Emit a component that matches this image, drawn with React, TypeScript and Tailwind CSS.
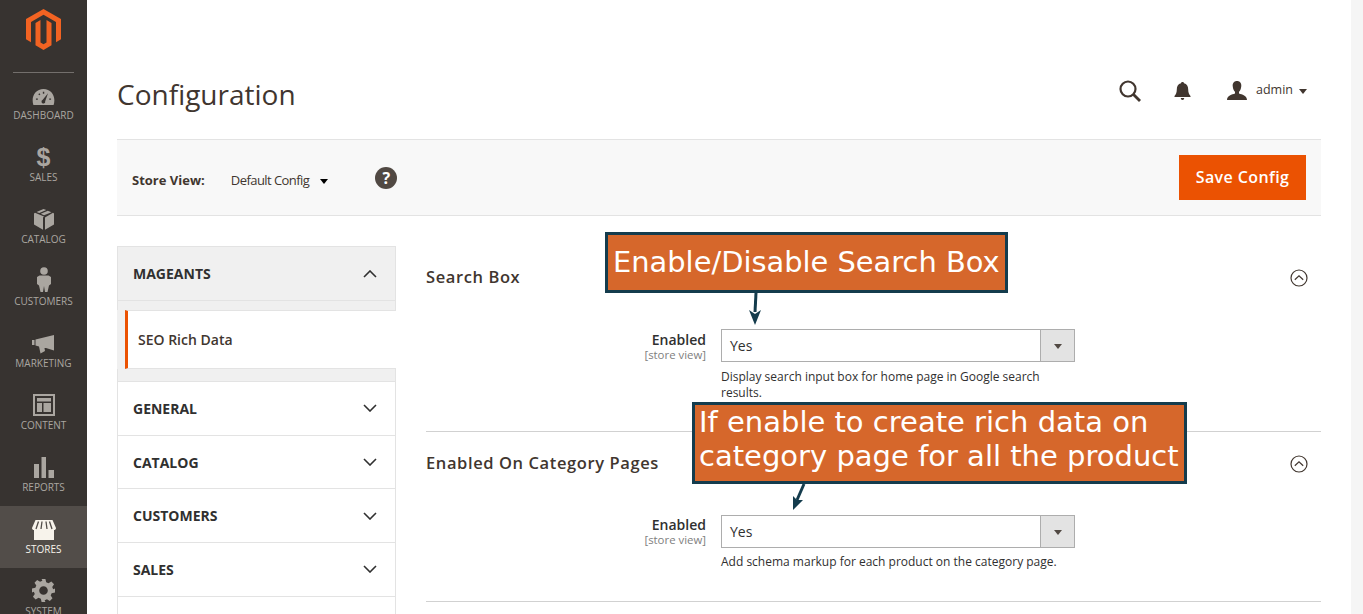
import React from "react";

const NavIcon: Record<string, React.ReactNode> = {
  dashboard: (
    <svg width="23" height="17" viewBox="0 0 24 18"><path fill="currentColor" fillRule="evenodd" d="M12 0C5 0 .5 5.5.5 12c0 2 .3 3.6.8 5h21.4c.5-1.4.8-3 .8-5C23.500 5.500 19 0 12 0Z" /><path fill="#373330" d="M16.800 4.500 11.200 11.500a2 2 0 1 0 2.600 1.400ZM4 10h2v1.500H4ZM18 10h2v1.500h-2ZM6.500 5.500l1.200-1 1 1.200-1.200 1ZM11.300 3h1.500v2h-1.500Z" /></svg>
  ),
  sales: (
    <span className="block text-[25px] leading-[24px] font-bold font-['Liberation_Sans',sans-serif] translate-y-[1px]">$</span>
  ),
  catalog: (
    <svg width="20" height="21" viewBox="0 0 20 21"><path fill="currentColor" d="M10 7.500 1 3.800 0 4.500v11l9 5.200V8.500ZM11 8.500v12.200l9-5.200v-11l-1-.700ZM9.500 0 2.500 3l2.800 1.100 7-3ZM13.800 1.800l-7 3L10 6.300l7.500-3Z" /></svg>
  ),
  customers: (
    <svg width="14" height="25" viewBox="0 0 14 25"><circle cx="7" cy="4" r="3.800" fill="currentColor" /><path fill="currentColor" d="M2.500 8.500h9L14 10v7l-2 1.500L10.500 25H8l-1-6-1 6H3.500L2 18.500 0 17v-7Z" /></svg>
  ),
  marketing: (
    <svg width="23" height="19" viewBox="0 0 23 19"><path fill="currentColor" d="M0 5h2.500v5H0ZM3.500 4.500 22 0v15.500l-8-2.500-1.500 0 .5 3-4.500 2.500L7 11.500l-3.500-1Z" /></svg>
  ),
  content: (
    <svg width="22" height="22" viewBox="0 0 22 22"><path fill="currentColor" fillRule="evenodd" d="M0 0h22v22H0Zm2 2v18h18V2Z" /><path fill="currentColor" d="M4 4h14v3.500H4ZM4 9h5v9H4ZM10.500 9H18v9h-7.500Z" /></svg>
  ),
  reports: (
    <svg width="20" height="21" viewBox="0 0 20 21"><path fill="currentColor" d="M0 7h5v14H0ZM7.500 0H12v21H7.500ZM14.500 13H20v8h-5.500Z" /></svg>
  ),
  stores: (
    <svg width="24" height="20" viewBox="0 0 24 20">
      <path fill="currentColor" d="M2 9h20v11H2Z" />
      <path fill="currentColor" d="M3.500 0h17L24 8c0 1.500-1 2-2 2H2C1 10 0 9.500 0 8Z" />
      <path fill="none" stroke="#524d49" strokeWidth="1.300" d="M6.500 1.500 4 9M10 1.500 9 9M14 1.500 15 9M17.500 1.500 20 9" />
    </svg>
  ),
  system: (
    <svg width="23" height="23" viewBox="0 0 24 24"><path fill="currentColor" fillRule="evenodd" d="M10 0h4l.8 3.500 2.400 1 3-1.900 2.800 2.800-1.900 3 1 2.400L24 10v4l-3.500.8-1 2.400 1.900 3-2.800 2.800-3-1.900-2.400 1L14 24h-4l-.8-3.500-2.400-1-3 1.900-2.800-2.800 1.900-3-1-2.400L0 14v-4l3.500-.8 1-2.400-1.900-3 2.800-2.800 3 1.900 2.400-1ZM12 7.500a4.500 4.500 0 1 0 0 9 4.500 4.500 0 0 0 0-9Z" /></svg>
  ),
};

const navItems = [
  ["dashboard", "DASHBOARD"],
  ["sales", "SALES"],
  ["catalog", "CATALOG"],
  ["customers", "CUSTOMERS"],
  ["marketing", "MARKETING"],
  ["content", "CONTENT"],
  ["reports", "REPORTS"],
  ["stores", "STORES"],
  ["system", "SYSTEM"],
];

function Sidebar() {
  return (
    <aside className="w-[87px] shrink-0 bg-[#373330] flex flex-col items-stretch overflow-hidden">
      <div className="h-[73px] shrink-0 flex justify-center pt-[9px] mx-[13px] border-b border-[#736f6c] -mb-px">
        <svg width="35" height="41" viewBox="0 0 35 41">
          <path fill="#f26322" d="M17.500 0 35 10.100v20.200l-5 2.900V13L17.500 5.800 5 13v20.200l-5-2.900V10.100Z" />
          <path fill="#f26322" d="M17.500 41 9.500 36.300V13.900l5-2.900v22.500l3 1.700 3-1.700V11l5 2.900v22.400Z" />
        </svg>
      </div>
      {navItems.map(([k, label]) => (
        <div
          key={k}
          className={
            "h-[62px] shrink-0 flex flex-col items-center justify-end pb-[12px] " +
            (k === "stores" ? "bg-[#524d49] text-[#f7f3eb]" : "text-[#aaa6a0]")
          }
        >
          <div className="h-[26px] flex items-end justify-center">{NavIcon[k]}</div>
          <div className="mt-[2px] text-[10px] leading-[14px]">{label}</div>
        </div>
      ))}
    </aside>
  );
}

function Chevron({ up }: { up?: boolean }) {
  return (
    <svg width="14" height="8" viewBox="0 0 14 8" className="shrink-0">
      <path d={up ? "M1 7l6-6 6 6" : "M1 1l6 6 6-6"} fill="none" stroke="#303030" strokeWidth="1.600" />
    </svg>
  );
}

function SideRow({ label }: { label: string }) {
  return (
    <div className="h-[54.700px] -mb-px bg-white border border-[#e3e3e3] pl-[15px] pr-[18px] flex items-center justify-between">
      <span className="text-[14px] font-bold text-[#303030]">{label}</span>
      <Chevron />
    </div>
  );
}

function LeftNav() {
  return (
    <div className="w-[279px] shrink-0">
      <div className="h-[55px] bg-[#f0f0f0] border border-[#e3e3e3] pl-[15px] pr-[18px] flex items-center justify-between">
        <span className="text-[14px] font-bold text-[#303030]">MAGEANTS</span>
        <Chevron up />
      </div>
      <div className="h-[9px] bg-[#f0f0f0] border-x border-[#e3e3e3]" />
      <div className="flex h-[59px] pl-[8px] border-r border-[#e3e3e3] bg-[#f0f0f0]">
        <div className="flex-1 bg-white border-l-[3px] border-[#eb5202] pl-[10px] flex items-center text-[14px] font-semibold text-[#41362f] border-b border-b-[#e3e3e3] border-t border-t-[#e3e3e3] -mr-px">
          SEO Rich Data
        </div>
      </div>
      <div className="h-[12px] bg-[#f0f0f0] border-x border-[#e3e3e3]" />
      <SideRow label="GENERAL" />
      <SideRow label="CATALOG" />
      <SideRow label="CUSTOMERS" />
      <SideRow label="SALES" />
      <div className="h-[40px] bg-white border border-[#e3e3e3]" />
    </div>
  );
}

function Collapse() {
  return (
    <svg width="18" height="18" viewBox="0 0 18 18" className="shrink-0 mt-[2px]">
      <circle cx="9" cy="9" r="8" fill="none" stroke="#41362f" strokeWidth="1.200" />
      <path d="M4.800 10.800 9 6.800l4.200 4" fill="none" stroke="#41362f" strokeWidth="1.200" />
    </svg>
  );
}

function Field({ help, tight }: { help: React.ReactNode; tight?: boolean }) {
  return (
    <div className="flex pl-[145px]">
      <div className={"w-[135px] text-right " + (tight ? "pt-0" : "pt-[1px]")}>
        <div className="text-[14px] leading-[19px] font-semibold text-[#303030]">Enabled</div>
        <div className="text-[11.400px] leading-[12px] text-[#808080]">[store view]</div>
      </div>
      <div className="ml-[15px] w-[354px]">
        <div className="h-[33px] border border-[#adadad] bg-white flex items-center justify-between">
          <span className="pl-[8px] text-[14px] text-[#303030]">Yes</span>
          <span className="w-[34px] h-full bg-[#e3e3e3] border-l border-[#adadad] flex items-center justify-center">
            <span className="w-0 h-0 border-x-[4px] border-x-transparent border-t-[5px] border-t-[#514943] mt-[1px]" />
          </span>
        </div>
        <div className={"text-[12px] leading-[16px] text-[#303030] " + (tight ? "mt-[6px]" : "mt-[7px]")}>{help}</div>
      </div>
    </div>
  );
}

function Section({ title, children }: { title: string; children: React.ReactNode }) {
  return (
    <section>
      <div className="h-[62px] flex items-center justify-between pr-[13px]">
        <h2 className="text-[16.500px] leading-[22px] font-semibold text-[#41362f] tracking-[0.6px]">{title}</h2>
        <Collapse />
      </div>
      {children}
    </section>
  );
}

function Callout({ className, children }: { className: string; children: React.ReactNode }) {
  return (
    <div className={"absolute bg-[#d6672b] border-[3px] border-[#143c4d] text-white font-['DejaVu_Sans',sans-serif] leading-[34px] " + className}>
      {children}
    </div>
  );
}

export default function App() {
  return (
    <div className="relative h-[614px] overflow-hidden flex bg-white font-['Open_Sans',sans-serif]">
      <Sidebar />
      <main className="flex-1 min-w-0 px-[30px] pt-[74px]">
        <header className="h-[65px] flex items-start justify-between">
          <h1 className="text-[28px] leading-[40px] text-[#41362f]">Configuration</h1>
          <div className="flex items-center h-[34px] pr-[14px]">
            <svg width="22" height="22" viewBox="0 0 22 22">
              <circle cx="9" cy="9" r="7.500" fill="none" stroke="#41362f" strokeWidth="2.200" />
              <path d="M14.500 14.500 21 21" stroke="#41362f" strokeWidth="2.800" />
            </svg>
            <svg width="17" height="18" viewBox="0 0 17 18" className="ml-[33px]">
              <path fill="#41362f" d="M8.500 0c1 0 1.500.6 1.500 1.300C13 2 14.200 4.500 14.200 7.500c0 3 .8 5 2.300 6.500v1H.500v-1C2 12.500 2.800 10.500 2.800 7.500 2.800 4.500 4 2 7 1.300 7 .6 7.500 0 8.500 0ZM6.800 16h3.400c0 1-.7 2-1.700 2s-1.700-1-1.700-2Z" />
            </svg>
            <svg width="20" height="19" viewBox="0 0 20 19" className="ml-[36px] -mt-[2px]">
              <path fill="#41362f" d="M10 0c3 0 4.500 2.200 4.300 5-.2 2.800-1.300 5-2.300 5.800v1.700c3 1.200 8 1.800 8 6.500H0c0-4.700 5-5.300 8-6.500v-1.700C7 10 5.900 7.800 5.700 5 5.500 2.200 7 0 10 0Z" />
            </svg>
            <span className="ml-[9px] text-[12.500px] text-[#41362f] -mt-[1px]">admin</span>
            <span className="ml-[6px] w-0 h-0 border-x-[4px] border-x-transparent border-t-[5px] border-t-[#41362f]" />
          </div>
        </header>

        <div className="h-[77px] bg-[#f8f8f8] border-y border-[#e3e3e3] flex items-center justify-between pl-[15px] pr-[15px]">
          <div className="flex items-center">
            <span className="text-[13px] font-bold text-[#41362f] mt-[7px]">Store View:</span>
            <span className="ml-[26px] text-[13px] text-[#41362f] mt-[7px] tracking-[-0.55px]">Default Config</span>
            <span className="ml-[11px] mt-[7px] w-0 h-0 border-x-[4px] border-x-transparent border-t-[5px] border-t-black" />
            <span className="ml-[47px] w-[22px] h-[22px] rounded-full bg-[#514943] text-white text-[16px] font-bold flex items-center justify-center">?</span>
          </div>
          <div className="h-[45px] w-[127px] pb-[2px] bg-[#eb5202] text-white text-[16px] font-semibold tracking-[0.4px] flex items-center justify-center">
            Save Config
          </div>
        </div>

        <div className="flex mt-[30px]">
          <LeftNav />
          <div className="flex-1 min-w-0 ml-[30px]">
            <Section title="Search Box">
              <div className="pt-[21px] h-[124px] border-b border-[#d1d1d1]">
                <Field help={<>Display search input box for home page in Google search results.</>} />
              </div>
            </Section>
            <Section title="Enabled On Category Pages">
              <div className="pt-[21px] h-[108px] border-b border-[#d1d1d1]">
                <Field tight help={<>Add schema markup for each product on the category page.</>} />
              </div>
            </Section>
          </div>
        </div>
      </main>
      <div className="w-[12px] shrink-0 bg-[#f5f5f5]" />

      <Callout className="left-[605px] top-[232px] w-[403px] h-[61px] pl-[5px] pt-[10px] whitespace-nowrap text-[28.900px]">Enable/Disable Search Box</Callout>
      <Callout className="left-[692px] top-[402px] w-[495px] h-[82px] pl-[4px] whitespace-nowrap text-[29px]">
        <div>If enable to create rich data on</div>
        <div>category page for all the product</div>
      </Callout>

      <svg className="absolute left-[745px] top-[292px]" width="20" height="34" viewBox="0 0 20 34">
        <path d="M11 1 10 20" stroke="#143c4d" strokeWidth="3" fill="none" />
        <path d="M4 18 L10 33 L16 18 L10 22Z" fill="#143c4d" />
      </svg>
      <svg className="absolute left-[788px] top-[483px]" width="22" height="28" viewBox="0 0 22 28">
        <path d="M16 1 9 17" stroke="#143c4d" strokeWidth="3" fill="none" />
        <path d="M5 13 L5 27 L15 17 L9 17Z" fill="#143c4d" />
      </svg>
    </div>
  );
}
